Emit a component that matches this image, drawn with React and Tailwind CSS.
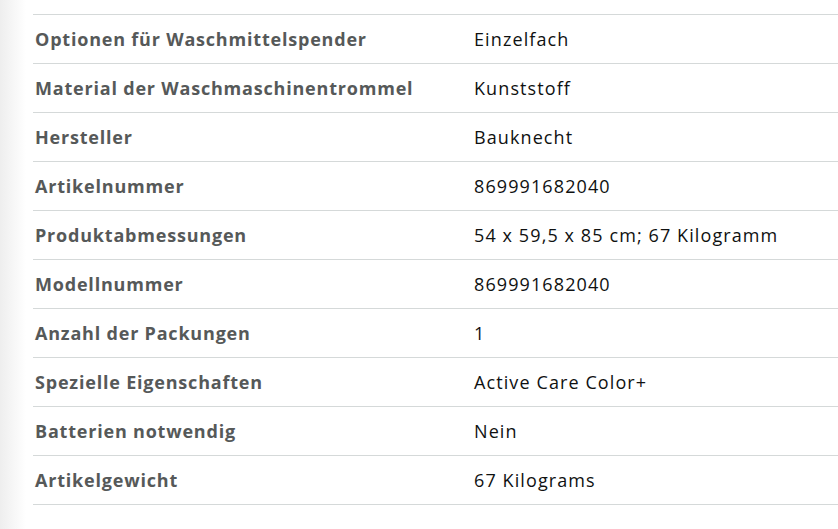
import React from 'react';

const rows = [
  ['Optionen für Waschmittelspender', 'Einzelfach'],
  ['Material der Waschmaschinentrommel', 'Kunststoff'],
  ['Hersteller', 'Bauknecht'],
  ['Artikelnummer', '869991682040'],
  ['Produktabmessungen', '54 x 59,5 x 85 cm; 67 Kilogramm'],
  ['Modellnummer', '869991682040'],
  ['Anzahl der Packungen', '1'],
  ['Spezielle Eigenschaften', 'Active Care Color+'],
  ['Batterien notwendig', 'Nein'],
  ['Artikelgewicht', '67 Kilograms'],
];

export default function App() {
  return (
    <div className="w-[838px] h-[529px] bg-[linear-gradient(to_right,#eeeeee,#ffffff_26px)] pl-[33px] pt-[14px] font-['Open_Sans',sans-serif] text-[18px]">
      {/* Product details table */}
      <div className="border-t border-[#d5d9d9]">
        {rows.map(([label, value]) => (
          <div key={label} className="flex items-center h-[49px] border-b border-[#d5d9d9]">
            <div className="w-[441px] pl-[2px] font-bold tracking-[0.8px] text-[#565959]">{label}</div>
            <div className="tracking-[1.1px] text-[#0f1111]">{value}</div>
          </div>
        ))}
      </div>
    </div>
  );
}
